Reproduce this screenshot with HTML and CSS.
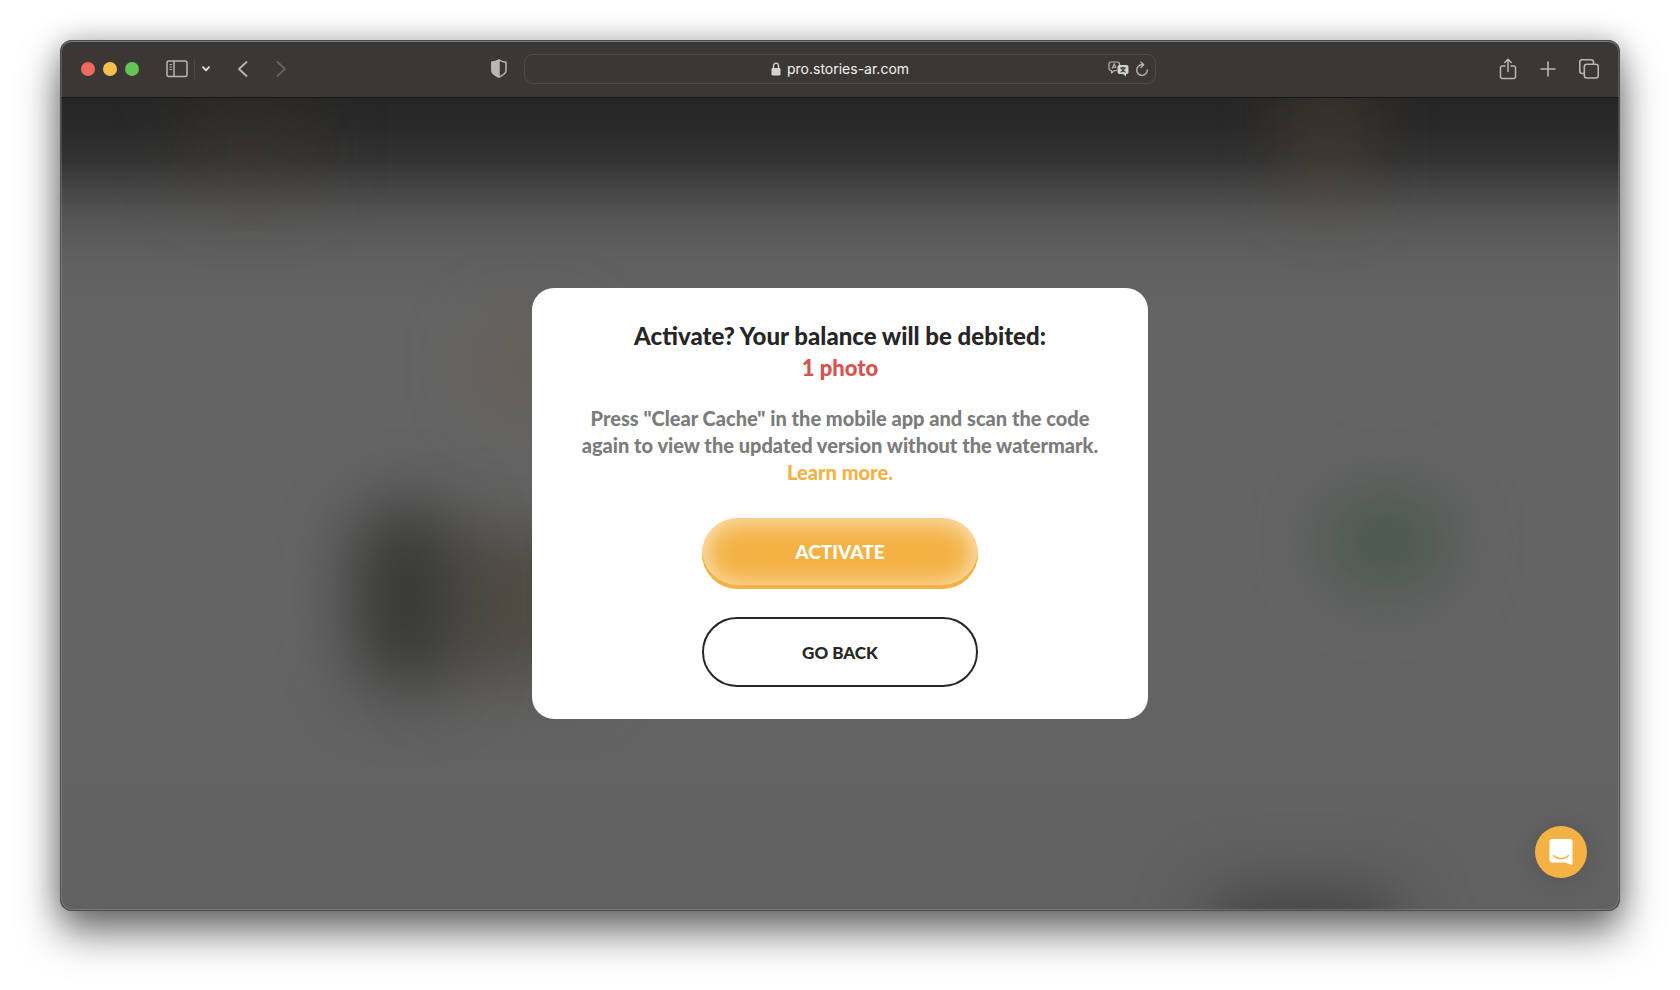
FILE: index.html
```html
<!DOCTYPE html>
<html lang="en">
<head>
<meta charset="utf-8">
<title>Stories AR</title>
<link rel="stylesheet" href="styles.css">
</head>
<body>
<div class="window">
  <header class="toolbar">
    <div class="tools tools-start">
      <div class="lights">
        <button class="light light-close" aria-label="Close"></button>
        <button class="light light-min" aria-label="Minimize"></button>
        <button class="light light-max" aria-label="Zoom"></button>
      </div>
      <div class="sidebar-group">
        <button class="tool" aria-label="Sidebar">
          <svg width="22" height="18" viewBox="0 0 22 18" fill="none" stroke="currentColor" stroke-width="1.5"><rect x="1" y="1" width="20" height="15.500" rx="2"/><path d="M8 1v15.500"/><path d="M3.500 4.500h2.500M3.500 7h2.500M3.500 9.500h2.500" stroke-width="1"/></svg>
        </button>
        <span class="divider"></span>
        <button class="tool tool-bright" aria-label="Tab groups">
          <svg width="10" height="8" viewBox="0 0 10 8" fill="none" stroke="currentColor" stroke-width="1.800" stroke-linecap="round" stroke-linejoin="round"><path d="M2 2.200l3 3.200 3-3.200"/></svg>
        </button>
      </div>
      <div class="nav-group">
        <button class="tool" aria-label="Back">
          <svg width="12" height="18" viewBox="0 0 12 18" fill="none" stroke="currentColor" stroke-width="1.800" stroke-linecap="round" stroke-linejoin="round"><path d="M9.500 2L2 9l7.500 7"/></svg>
        </button>
        <button class="tool tool-dim" aria-label="Forward">
          <svg width="12" height="18" viewBox="0 0 12 18" fill="none" stroke="currentColor" stroke-width="1.800" stroke-linecap="round" stroke-linejoin="round"><path d="M2.500 2L10 9l-7.500 7"/></svg>
        </button>
      </div>
      <button class="tool shield" aria-label="Privacy report">
        <svg width="16" height="19" viewBox="0 0 16 19" fill="none" stroke="currentColor" stroke-width="1.500" stroke-linejoin="round"><path d="M8 1C6 2.500 3.500 3 1 3.300v8.200C1 14.500 4.500 16.500 8 18c3.500-1.500 7-3.500 7-6.500V3.300C12.500 3 10 2.500 8 1z"/><path d="M8 1C6 2.500 3.500 3 1 3.300v8.200C1 14.500 4.500 16.500 8 18z" fill="currentColor"/></svg>
      </button>
    </div>
    <div class="address">
      <a class="site" href="#">
        <svg width="10" height="14" viewBox="0 0 10 14" fill="none"><path d="M2.500 6.500V4a2.500 2.800 0 0 1 5 0v2.500" stroke="currentColor" stroke-width="1.300"/><rect x="0.500" y="6" width="9" height="7.500" rx="1.300" fill="currentColor"/></svg>
        <span>pro.stories-ar.com</span>
      </a>
      <div class="address-actions">
        <button class="tool" aria-label="Translate">
          <svg width="21" height="16" viewBox="0 0 21 16" fill="none"><path d="M9 9.500H6.500L3.500 12V9.500H3a2 2 0 0 1-2-2V3a2 2 0 0 1 2-2h6.500a2 2 0 0 1 2 2v1" stroke="currentColor" stroke-width="1.200" stroke-linejoin="round"/><path d="M4 7.800L6.200 2.800l1.800 4.200M4.800 6.200h2.800" stroke="currentColor" stroke-width="1.100"/><path d="M11.500 4H18.500a2 2 0 0 1 2 2v5a2 2 0 0 1-2 2h-.5v2.500L15 13h-3.500a2 2 0 0 1-2-2V6a2 2 0 0 1 2-2z" fill="#d5d3d1"/><path d="M12 7h6M15 5.500V7M16.800 7c-.6 2-2.200 3.500-4.200 4.200M13.300 7c.6 2 2.200 3.500 4.200 4.200" stroke="#3b3633" stroke-width="1.100"/></svg>
        </button>
        <button class="tool" aria-label="Reload">
          <svg width="14" height="16" viewBox="0 0 14 16" fill="none" stroke="currentColor" stroke-width="1.400" stroke-linecap="round" stroke-linejoin="round"><path d="M7.500 3.800A5.300 5.300 0 1 0 12.300 9"/><path d="M6 1.300l2.700 2.500L6 6.500"/></svg>
        </button>
      </div>
    </div>
    <div class="tools tools-end">
      <button class="tool" aria-label="Share">
        <svg width="18" height="22" viewBox="0 0 18 22" fill="none" stroke="currentColor" stroke-width="1.500" stroke-linecap="round" stroke-linejoin="round"><path d="M6 8H3.500a2 2 0 0 0-2 2v8.500a2 2 0 0 0 2 2h11a2 2 0 0 0 2-2V10a2 2 0 0 0-2-2H12"/><path d="M9 13.500V1.500M5.800 4.500L9 1.300l3.200 3.200"/></svg>
      </button>
      <button class="tool" aria-label="New tab">
        <svg width="16" height="16" viewBox="0 0 16 16" fill="none" stroke="currentColor" stroke-width="1.600" stroke-linecap="round"><path d="M8 1v14M1 8h14"/></svg>
      </button>
      <button class="tool" aria-label="Tab overview">
        <svg width="20" height="20" viewBox="0 0 20 20" fill="none" stroke="currentColor" stroke-width="1.600" stroke-linejoin="round"><rect x="5.300" y="5.300" width="14" height="13.700" rx="2.500"/><path d="M5.300 14.500H3.300A2.500 2.500 0 0 1 .8 12V3.300A2.500 2.500 0 0 1 3.300.8H12a2.500 2.500 0 0 1 2.500 2.500v2"/></svg>
      </button>
    </div>
  </header>

  <main class="page">
    <div class="backdrop" aria-hidden="true">
      <span class="blob blob-gold-left"></span>
      <span class="blob blob-gold-right"></span>
      <span class="blob blob-sand"></span>
      <span class="blob blob-olive"></span>
      <span class="blob blob-dark"></span>
      <span class="blob blob-green"></span>
      <span class="blob blob-bottom"></span>
    </div>
    <section class="dialog" role="dialog" aria-labelledby="dialog-title">
      <h1 class="title" id="dialog-title">Activate? Your balance will be debited:<br><strong class="cost">1 photo</strong></h1>
      <p class="note">Press "Clear Cache" in the mobile app and scan the code<br>again to view the updated version without the watermark.<br><a class="more" href="#">Learn more.</a></p>
      <div class="actions">
        <button class="btn btn-primary">ACTIVATE</button>
        <button class="btn btn-outline">GO BACK</button>
      </div>
    </section>
    <button class="chat" aria-label="Open chat">
      <svg width="24" height="28" viewBox="0 0 24 28"><path d="M3 1h18a2.500 2.500 0 0 1 2.500 2.500V27L16 24.500H3A2.500 2.500 0 0 1 .5 22V3.500A2.500 2.500 0 0 1 3 1z" fill="#fff"/><path d="M4.500 17.800c4.500 3.800 10.500 3.800 15 0" fill="none" stroke="#f4b244" stroke-width="1.500" stroke-linecap="round"/></svg>
    </button>
  </main>
</div>
</body>
</html>
```
FILE: styles.css
```css
* { box-sizing: border-box; }

body {
  margin: 0;
  min-height: 100vh;
  padding: 40px 60px 79px;
  display: flex;
  background: #fff;
  font-family: Inter, "Liberation Sans", sans-serif;
}

button {
  margin: 0;
  padding: 0;
  border: 0;
  background: none;
  color: inherit;
  font: inherit;
  cursor: pointer;
}

svg { display: block; }

.window {
  flex: 1;
  display: flex;
  flex-direction: column;
  position: relative;
  border-radius: 12px;
  background: #3b3734;
  box-shadow: 0 22px 40px rgba(0, 0, 0, .54), 0 0 28px rgba(0, 0, 0, .24);
}

/* Light rim drawn round the whole window */
.window::after {
  content: "";
  position: absolute;
  inset: 0;
  border-radius: inherit;
  box-shadow: inset 0 0 0 1px #4b4b4b, inset 0 0 0 2px rgba(255, 255, 255, .16), inset 0 2px 0 rgba(255, 255, 255, .2);
  pointer-events: none;
}

.toolbar {
  display: grid;
  grid-template-columns: 1fr minmax(0, 632px) 1fr;
  align-items: center;
  height: 58px;
  padding: 0 21px;
  border-bottom: 1px solid #161616;
  color: #bbb6b2;
}

.tools,
.lights,
.sidebar-group,
.nav-group,
.address,
.address-actions,
.site {
  display: flex;
  align-items: center;
}

.tools-start { padding-right: 17px; }
.tools-end { justify-content: flex-end; gap: 23px; }

.lights { gap: 8px; }
.light { width: 14px; height: 14px; border-radius: 50%; }
.light-close { background: #ed6a5f; }
.light-min { background: #f5bf4f; }
.light-max { background: #62c554; }

.sidebar-group { gap: 6px; margin-left: 27px; }
.divider { width: 1px; height: 20px; background: #4c4744; }
.nav-group { gap: 26px; margin-left: 26px; }
.tool { display: flex; }
.tool-bright { color: #e4e2e0; }
.tool-dim { color: #67625f; }
.shield { margin-left: auto; }

.address {
  height: 30px;
  padding: 0 6px;
  border: 1px solid #504b48;
  border-radius: 9px;
}
.address::before { content: ""; flex: 1; }
.site {
  gap: 6px;
  color: #f3f2f1;
  font-size: 14px;
  font-weight: 400;
  line-height: 20px;
  text-decoration: none;
}
.site svg { color: #d5d3d1; }
.address-actions { flex: 1; justify-content: flex-end; gap: 6px; }

.page {
  flex: 1;
  position: relative;
  display: flex;
  align-items: center;
  justify-content: center;
  padding: 20px 20px 22px;
  border-radius: 0 0 12px 12px;
  background: linear-gradient(#262626 0, #2a2a2a 30px, #323232 60px, #424242 85px, #505050 110px, #5a5a5a 135px, #606060 165px, #646464 220px, #646464 500px, #616161 100%);
}

/* Out-of-focus page content behind the dialog */
.backdrop {
  position: absolute;
  inset: 0;
  overflow: hidden;
  border-radius: inherit;
}
.blob { position: absolute; filter: blur(34px); }
.blob-gold-left { left: 8%; top: 0; width: 130px; height: 100px; background: rgba(80, 70, 40, .22); }
.blob-gold-right { left: 79%; top: -5%; width: 70px; height: 140px; background: rgba(92, 74, 50, .4); }
.blob-sand { left: 27%; top: 28%; width: 100px; height: 80px; background: rgba(104, 90, 70, .5); }
.blob-olive { left: 24%; top: 53%; width: 150px; height: 150px; background: #4e4b43; }
.blob-dark { left: 19%; top: 50%; width: 98px; height: 184px; border-radius: 45px; background: rgba(52, 52, 50, .95); }
.blob-green { left: 81%; top: 49%; width: 124px; height: 92px; border-radius: 45px; background: #48574d; }
.blob-bottom { left: 74%; top: 98%; width: 180px; height: 130px; background: #404040; }

.dialog {
  position: relative;
  width: 616px;
  max-width: 100%;
  padding: 32px;
  border-radius: 22px;
  background: #fff;
  text-align: center;
}

.title {
  margin: 0 0 22px;
  color: #262626;
  font-family: Lato, sans-serif;
  font-size: 24px;
  font-weight: 900;
  line-height: 31px;
}
.cost { color: #d9504c; font-size: 22px; font-weight: 900; }

.note {
  margin: 0 0 32px;
  color: #7c7c7c;
  font-family: Lato, sans-serif;
  font-size: 20px;
  font-weight: 900;
  line-height: 27px;
}
.more { color: #f4b244; text-decoration: none; }

.actions {
  display: flex;
  flex-direction: column;
  align-items: center;
  gap: 28px;
}
.btn {
  width: 276px;
  border-radius: 36px;
  font-family: Lato, sans-serif;
}
.btn-primary {
  height: 71px;
  padding-bottom: 4px;
  background: #f4b244;
  box-shadow: inset 0 -4px 0 #f4b244, inset 0 0 24px 4px rgba(255, 255, 255, .65);
  color: #fff;
  font-size: 19px;
  font-weight: 900;
}
.btn-outline {
  height: 70px;
  border: 2px solid #262626;
  color: #262626;
  font-size: 17px;
  font-weight: 900;
}

.chat {
  position: absolute;
  right: 33px;
  bottom: 33px;
  display: flex;
  align-items: center;
  justify-content: center;
  width: 52px;
  height: 52px;
  border-radius: 50%;
  background: #f4b244;
  box-shadow: 0 2px 24px rgba(0, 0, 0, .12);
}
```
